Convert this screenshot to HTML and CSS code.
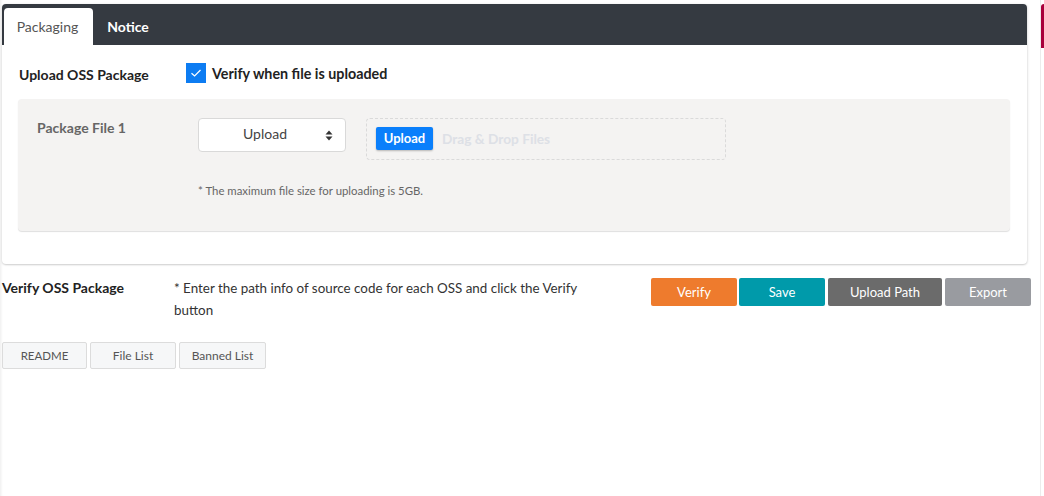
FILE: index.html
```html
<!DOCTYPE html>
<html>
<head>
<meta charset="utf-8">
<link rel="stylesheet" href="styles.css">
</head>
<body>
<div class="page">
  <div class="main">
    <div class="card">
      <div class="tabbar">
        <div class="tab active">Packaging</div>
        <div class="tab">Notice</div>
      </div>
      <div class="card-body">
        <div class="upload-row">
          <div class="section-title">Upload OSS Package</div>
          <label class="check">
            <span class="checkbox"><svg width="12" height="10" viewBox="0 0 12 10"><path d="M1.5 5.2 L4.6 8 L10.5 2" fill="none" stroke="#fff" stroke-width="1.2"/></svg></span>
            <span class="check-label">Verify when file is uploaded</span>
          </label>
        </div>
        <div class="file-box">
          <div class="file-label">Package File 1</div>
          <div class="file-main">
            <div class="file-controls">
              <div class="select">
                <span class="select-text">Upload</span>
                <svg class="select-arrows" width="8" height="11" viewBox="0 0 8 11"><path d="M4 0.5 L7.5 4.5 L0.5 4.5 Z M4 10.5 L7.5 6.5 L0.5 6.5 Z" fill="#333"/></svg>
              </div>
              <div class="dropzone">
                <span class="upload-btn">Upload</span>
                <span class="drop-text">Drag &amp; Drop Files</span>
              </div>
            </div>
            <div class="file-note">* The maximum file size for uploading is 5GB.</div>
          </div>
        </div>
      </div>
    </div>
    <div class="verify-row">
      <div class="verify-title">Verify OSS Package</div>
      <div class="verify-desc">* Enter the path info of source code for each OSS and click the Verify button</div>
      <div class="actions">
        <button class="btn btn-verify">Verify</button>
        <button class="btn btn-save">Save</button>
        <button class="btn btn-path">Upload Path</button>
        <button class="btn btn-export">Export</button>
      </div>
    </div>
    <div class="subtabs">
      <button class="subtab">README</button>
      <button class="subtab">File List</button>
      <button class="subtab">Banned List</button>
    </div>
  </div>
  <div class="side">
    <div class="side-head"></div>
  </div>
</div>
</body>
</html>
```
FILE: styles.css
```css
html, body {
  margin: 0;
  padding: 0;
  background: #fff;
  height: 100%;
}
body {
  font-family: "Source Sans Pro", Lato, "Noto Sans", sans-serif;
  font-size: 13px;
  color: #333;
}
.page {
  display: flex;
  height: 496px;
  overflow: hidden;
}
.main {
  width: 1031px;
  padding-left: 2px;
  box-sizing: border-box;
  box-shadow: inset 3px 0 3px -2px rgba(0,0,0,0.08);
}
.card {
  margin-top: 4px;
  width: 1025px;
  border-radius: 4px;
  background: #fff;
  box-shadow: 0 1px 2px rgba(0,0,0,0.18), 1px 0 3px rgba(0,0,0,0.06);
}
.tabbar {
  height: 41px;
  background: #353a41;
  border-radius: 4px 4px 0 0;
  display: flex;
  align-items: flex-end;
  padding-left: 2px;
}
.tab {
  height: 37px;
  display: flex;
  align-items: center;
  justify-content: center;
  font-size: 14px;
  color: #fff;
  font-weight: 700;
  width: 70px;
  box-sizing: border-box;
  padding-bottom: 1px;
}
.tab.active {
  width: 89px;
  background: #fff;
  color: #555;
  font-weight: 400;
  border-radius: 4px 4px 0 0;
  padding-right: 2px;
}
.card-body {
  padding: 18px 17px 33px 16px;
}
.upload-row {
  display: flex;
  align-items: center;
  height: 20px;
}
.section-title {
  font-weight: 700;
  font-size: 14px;
  color: #222;
  width: 167px;
  padding-left: 1px;
  padding-top: 2px;
}
.check {
  display: flex;
  align-items: center;
  gap: 6px;
}
.checkbox {
  width: 20px;
  height: 20px;
  background: #0d7cf2;
  display: flex;
  align-items: center;
  justify-content: center;
}
.check-label {
  font-weight: 700;
  font-size: 14.3px;
  color: #222;
}
.file-box {
  margin-top: 16px;
  height: 132px;
  box-sizing: border-box;
  background: #f4f3f2;
  border-radius: 4px;
  box-shadow: 0 1px 1px rgba(0,0,0,0.13);
  display: flex;
  padding: 19px 0 0 19px;
}
.file-label {
  width: 161px;
  font-weight: 700;
  font-size: 14px;
  color: #666;
  padding-top: 1px;
}
.file-controls {
  display: flex;
  gap: 20px;
}
.select {
  width: 148px;
  height: 34px;
  box-sizing: border-box;
  background: #fff;
  border: 1px solid #d9d9d9;
  border-radius: 4px;
  display: flex;
  align-items: center;
  padding-bottom: 3px;
}
.select-text {
  flex: 1;
  text-align: center;
  font-size: 14px;
  color: #444;
  padding-left: 6px;
}
.select-arrows {
  margin-right: 12px;
  margin-top: 3px;
}
.dropzone {
  width: 360px;
  height: 42px;
  box-sizing: border-box;
  border: 1px dashed #dadada;
  border-radius: 4px;
  display: flex;
  align-items: center;
  padding-left: 9px;
  padding-bottom: 2px;
  gap: 9px;
}
.upload-btn {
  background: #0a7ffb;
  color: #fff;
  font-weight: 700;
  font-size: 13px;
  height: 23px;
  width: 57px;
  display: flex;
  align-items: center;
  justify-content: center;
  border-radius: 2px;
  box-shadow: 0 1px 2px rgba(0,0,0,0.25);
}
.drop-text {
  color: #dde0e6;
  font-weight: 700;
  font-size: 13.7px;
}
.file-note {
  margin-top: 24px;
  font-size: 11.4px;
  color: #666;
}
.verify-row {
  display: flex;
  align-items: flex-start;
  margin-top: 14px;
}
.verify-title {
  width: 172px;
  font-weight: 700;
  font-size: 14px;
  color: #222;
  padding-top: 1px;
}
.verify-desc {
  width: 420px;
  font-size: 13.4px;
  line-height: 22px;
  color: #333;
  margin-top: -1px;
}
.actions {
  margin-left: auto;
  display: flex;
  gap: 2px;
}
.btn {
  border: none;
  font-family: inherit;
  font-size: 13px;
  color: #fff;
  height: 28px;
  width: 86px;
  border-radius: 2px;
  padding: 0;
}
.btn-verify { background: #ee7b2d; }
.btn-save { background: #009aaa; margin-right: 1px; }
.btn-path { background: #6b6b6b; width: 114px; margin-right: 1px; }
.btn-export { background: #999ba0; }
.subtabs {
  display: flex;
  gap: 3px;
  margin-top: 21px;
}
.subtab {
  font-family: inherit;
  font-size: 12px;
  color: #555;
  background: #f6f7f8;
  border: 1px solid #dcdcdc;
  border-radius: 2px;
  height: 27px;
  width: 86px;
  padding: 0;
}
.subtab:first-child {
  width: 85px;
  font-size: 11.5px;
}
.subtab:last-child {
  width: 87px;
}
.side {
  margin-left: 9px;
  flex: 1;
  border-left: 1px solid #ececec;
}
.side-head {
  margin-top: 4px;
  height: 44px;
  background: #a8003b;
  border-top-left-radius: 3px;
}
```
